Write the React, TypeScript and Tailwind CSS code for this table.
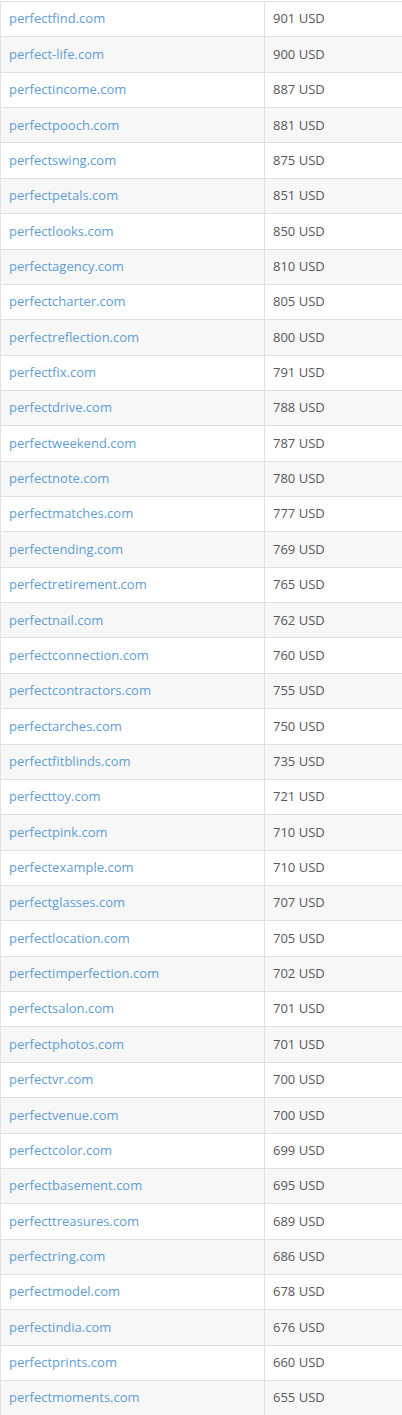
import React from "react";

const rows: [string, number][] = [
  ["perfectfind.com", 901],
  ["perfect-life.com", 900],
  ["perfectincome.com", 887],
  ["perfectpooch.com", 881],
  ["perfectswing.com", 875],
  ["perfectpetals.com", 851],
  ["perfectlooks.com", 850],
  ["perfectagency.com", 810],
  ["perfectcharter.com", 805],
  ["perfectreflection.com", 800],
  ["perfectfix.com", 791],
  ["perfectdrive.com", 788],
  ["perfectweekend.com", 787],
  ["perfectnote.com", 780],
  ["perfectmatches.com", 777],
  ["perfectending.com", 769],
  ["perfectretirement.com", 765],
  ["perfectnail.com", 762],
  ["perfectconnection.com", 760],
  ["perfectcontractors.com", 755],
  ["perfectarches.com", 750],
  ["perfectfitblinds.com", 735],
  ["perfecttoy.com", 721],
  ["perfectpink.com", 710],
  ["perfectexample.com", 710],
  ["perfectglasses.com", 707],
  ["perfectlocation.com", 705],
  ["perfectimperfection.com", 702],
  ["perfectsalon.com", 701],
  ["perfectphotos.com", 701],
  ["perfectvr.com", 700],
  ["perfectvenue.com", 700],
  ["perfectcolor.com", 699],
  ["perfectbasement.com", 695],
  ["perfecttreasures.com", 689],
  ["perfectring.com", 686],
  ["perfectmodel.com", 678],
  ["perfectindia.com", 676],
  ["perfectprints.com", 660],
  ["perfectmoments.com", 655],
];

export default function App() {
  return (
    <div
      className="w-[402px] bg-white pt-px"
      style={{ fontFamily: '"Open Sans", "Liberation Sans", sans-serif' }}
    >
      <div className="border-l border-[#e3e3e3]">
        {rows.map(([d, p], i) => (
          <div
            key={d}
            className={`flex h-[35.36px] items-center border-t border-[#e0e0e0] text-[13px] ${
              i % 2 === 1 ? "bg-[#f7f7f7]" : "bg-white"
            }`}
          >
            <div className="flex h-full w-[264px] items-center border-r border-[#e0e0e0] pl-[8px] text-[#5f9dd3]">
              {d}
            </div>
            <div className="flex h-full flex-1 items-center pl-[8px] text-[#585858]">
              {p} USD
            </div>
          </div>
        ))}
      </div>
    </div>
  );
}
